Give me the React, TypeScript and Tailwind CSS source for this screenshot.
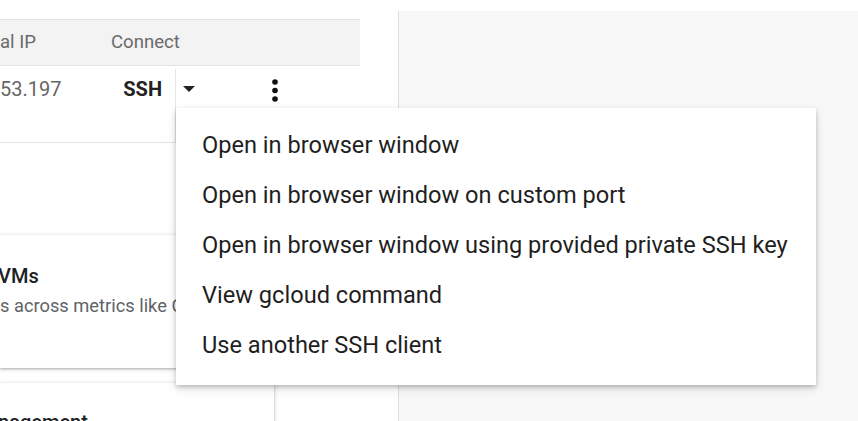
import React from "react";

const menuItems = [
	"Open in browser window",
	"Open in browser window on custom port",
	"Open in browser window using provided private SSH key",
	"View gcloud command",
	"Use another SSH client",
];

const cardShadow =
	"shadow-[0_1px_2px_rgba(60,64,67,0.3),0_1px_4px_1px_rgba(60,64,67,0.15)]";

const App: React.FC = () => {
	return (
		<div className="relative flex w-[858px] h-[421px] overflow-hidden bg-white font-['Roboto',sans-serif]">
			{/* Left: instances table and cards */}
			<div className="w-[398px] shrink-0 pt-[19px]">
				<div className="w-[360px]">
					{/* Header row */}
					<div className="flex items-center h-[47px] bg-[#f3f3f3] border-y border-[#e2e2e2] text-[18.6px] text-[#6b6b6b]">
						<div className="w-[110px]">al IP</div>
						<div className="pl-px">Connect</div>
					</div>
					{/* Instance row */}
					<div className="flex items-start h-[77px] border-b border-[#e2e2e2]">
						<div className="w-[110px] pt-[11px] leading-[24px] text-[20px] text-[#666]">53.197</div>
						<div className="w-[65px] flex justify-end pr-[13px] pt-[11px] leading-[24px] text-[20px] font-bold text-[#222]">
							SSH
						</div>
						<div className="self-stretch mt-[3px] border-l border-[#e6e6e6]" />
						<svg className="ml-[7px] mt-[20px]" width="12" height="6" viewBox="0 0 12 6">
							<polygon points="0,0 12,0 6,6" fill="#222" />
						</svg>
						<svg className="ml-[76px] mt-[12px]" width="8" height="26" viewBox="0 0 8 26">
							<circle cx="4" cy="4" r="2.8" fill="#111" />
							<circle cx="4" cy="12.5" r="2.8" fill="#111" />
							<circle cx="4" cy="21" r="2.8" fill="#111" />
						</svg>
					</div>
				</div>

				{/* Recommendation cards */}
				<div className={`mt-[92px] w-[275px] h-[133px] bg-white ${cardShadow} pt-[29px]`}>
					<div className="-ml-[2px] text-[20px] leading-[24px] font-medium text-[#202124]">VMs</div>
					<div className="mt-[6px] text-[18.3px] leading-[24px] text-[#5f6368] whitespace-nowrap">
						s across metrics like CPU
					</div>
				</div>
				<div className={`mt-[15px] w-[274px] h-[120px] bg-white ${cardShadow} pt-[27px]`}>
					<div className="-ml-[2px] text-[20px] leading-[24px] font-medium text-[#202124]">nagement</div>
				</div>
			</div>

			{/* Right: details panel */}
			<div className="flex-1 mt-[11px] bg-[#f8f8f8] border-l border-[#dedede]" />

			{/* SSH dropdown menu */}
			<div className="absolute left-[176px] top-[108px] w-[640px] h-[277px] py-[13px] bg-white shadow-[0_2px_4px_rgba(0,0,0,0.2),0_4px_10px_rgba(0,0,0,0.12)]">
				{menuItems.map((item) => (
					<div key={item} className="flex items-center h-[50px] pl-[26px] text-[23.6px] text-[#1f1f1f] whitespace-nowrap">
						{item}
					</div>
				))}
			</div>
		</div>
	);
};

export default App;
